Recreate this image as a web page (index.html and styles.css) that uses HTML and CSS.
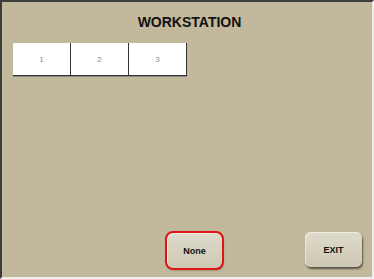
FILE: index.html
```html
<!DOCTYPE html>
<html lang="en">
<head>
    <meta charset="UTF-8">
    <title>Workstation</title>
    <link rel="stylesheet" href="styles.css">
</head>
<body>
    <!-- Main Screen -->
    <div class="screen">
        <h1 class="title">WORKSTATION</h1>

        <!-- Workstation Selection -->
        <div class="tiles">
            <div class="tile">1</div>
            <div class="tile">2</div>
            <div class="tile">3</div>
        </div>

        <!-- Bottom Buttons -->
        <div class="actions">
            <button class="action-button selected">None</button>
            <button class="action-button">EXIT</button>
        </div>
    </div>
</body>
</html>
```

FILE: styles.css
```css
/* Reset and Basic Styles */
* {
    box-sizing: border-box;
    margin: 0;
    padding: 0;
}

body {
    background-color: #ffffff;
    font-family: 'Liberation Sans', Arial, sans-serif;
}

/* Screen Frame */
.screen {
    width: 374px;
    height: 279px;
    display: flex;
    flex-direction: column;
    background-color: #c2b89b;
    border-style: solid;
    border-width: 2px;
    border-color: #3c3c3c #eeeeee #eeeeee #3c3c3c;
    padding: 12px 10px 9px 11px;
}

/* Heading */
.title {
    font-size: 14px;
    line-height: 16px;
    font-weight: bold;
    color: #111111;
    text-align: center;
    margin-left: 4px;
}

/* Tiles */
.tiles {
    display: flex;
    margin-top: 13px;
}

.tile {
    width: 58px;
    height: 33px;
    background-color: #ffffff;
    border-right: 1px solid #333333;
    border-bottom: 1px solid #333333;
    box-shadow: 0 1px 0 #8a8a8a;
    color: #8a8a8a;
    font-size: 8px;
    display: flex;
    align-items: center;
    justify-content: center;
}

/* Action Buttons */
.actions {
    display: flex;
    justify-content: flex-end;
    align-items: flex-start;
    gap: 83px;
    margin-top: auto;
}

.action-button {
    width: 57px;
    height: 35px;
    border: none;
    border-radius: 6px;
    background: linear-gradient(#dedbcc, #cdc8b3);
    box-shadow: inset 1px 1px 0 #eeebe0, 1px 2px 2px rgba(0, 0, 0, 0.55);
    color: #111111;
    font-family: 'Liberation Sans', Arial, sans-serif;
    font-size: 9px;
    font-weight: bold;
    cursor: pointer;
}

.action-button.selected {
    width: 55px;
    margin-top: 1px;
    outline: 2px solid #e01414;
    outline-offset: 0;
}
```
